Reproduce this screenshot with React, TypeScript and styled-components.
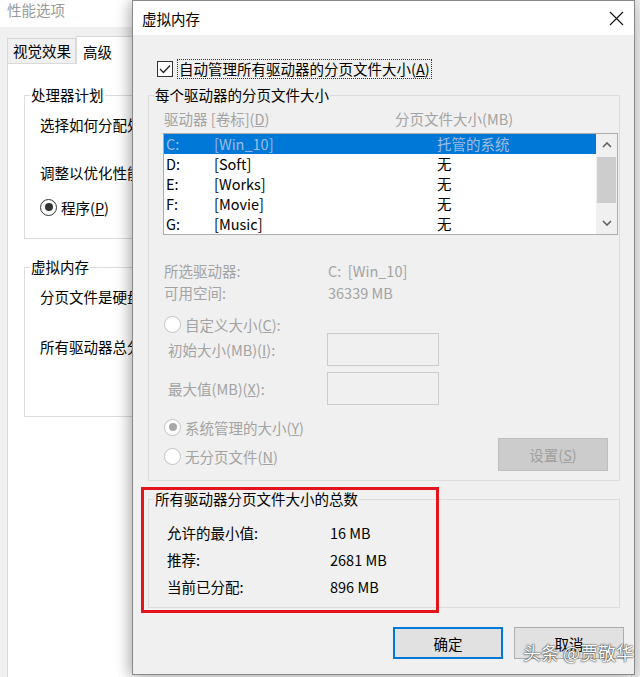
import React from "react";
import styled, { createGlobalStyle } from "styled-components";

const GlobalStyle = createGlobalStyle`
  html, body {
    margin: 0;
    padding: 0;
  }
  body {
    width: 640px;
    height: 677px;
    overflow: hidden;
    background: #f0f0f0;
    font-family: "Noto Sans CJK SC", "Noto Sans", sans-serif;
    font-size: 14.5px;
    color: #000;
  }
  * {
    box-sizing: border-box;
  }
`;

const Desktop = styled.div`
  position: relative;
  width: 640px;
  height: 677px;
  overflow: hidden;
`;

/* ---------- background window: 性能选项 ---------- */

const BackWindow = styled.div`
  position: absolute;
  left: 0;
  top: 0;
  width: 632px;
  height: 720px;
  display: flex;
  flex-direction: column;
  background: #f0f0f0;
`;

const BackTitle = styled.div`
  height: 27px;
  padding: 0 7px;
  line-height: 20px;
  background: #fff;
  color: #9a9a9a;
`;

const TabStrip = styled.div`
  display: flex;
  align-items: flex-end;
  height: 36px;
  padding-left: 7px;
`;

const Tab = styled.div<{ $active?: boolean }>`
  height: ${(p) => (p.$active ? "28px" : "25px")};
  padding: ${(p) => (p.$active ? "0 24px 0 6px" : "0 4px 0 5px")};
  line-height: ${(p) => (p.$active ? "30px" : "24px")};
  border: 1px solid #d9d9d9;
  border-bottom: none;
  background: ${(p) => (p.$active ? "#fff" : "#f0f0f0")};
  margin-bottom: ${(p) => (p.$active ? "-1px" : "0")};
  position: relative;
`;

const TabPanel = styled.div`
  flex: 1;
  margin-left: 7px;
  border: 1px solid #d9d9d9;
  background: #fff;
  padding: 21px 16px 0 16px;
`;

const GroupBox = styled.fieldset<{ $width?: number }>`
  margin: 0;
  padding: 0;
  border: 1px solid #dcdcdc;
  min-inline-size: 0;
  ${(p) => (p.$width ? `width: ${p.$width}px;` : "")}
`;

const Legend = styled.legend`
  margin-left: 5px;
  padding: 0 1px;
  line-height: 20px;
`;

const BackGroupBody = styled.div<{ $bottom: number }>`
  padding: 10px 15px ${(p) => p.$bottom}px;
`;

/* the window text runs on under the dialog; clip it there */
const TextLine = styled.div<{ $gap?: number }>`
  width: 110px;
  overflow: hidden;
  line-height: 20px;
  margin-top: ${(p) => p.$gap ?? 0}px;
  white-space: nowrap;
`;

const BackRadioRow = styled.div`
  display: flex;
  align-items: center;
  gap: 4px;
  width: 110px;
  overflow: hidden;
  height: 20px;
  margin-top: 14px;
  white-space: nowrap;
`;

const SecondGroup = styled.div`
  margin-top: 18px;
`;

/* ---------- dialog: 虚拟内存 ---------- */

const Dialog = styled.div`
  position: absolute;
  left: 132px;
  top: 0;
  width: 503px;
  height: 675px;
  border: 1px solid #8a8a8a;
  background: #f0f0f0;
  box-shadow: -3px 0 12px rgba(0, 0, 0, 0.2), 0 6px 18px rgba(0, 0, 0, 0.18);
  display: flex;
  flex-direction: column;
`;

const DialogTitle = styled.div`
  height: 34px;
  display: flex;
  align-items: center;
  justify-content: space-between;
  padding-left: 9px;
  background: #fff;
`;

const CloseBox = styled.div`
  width: 36px;
  height: 34px;
  display: flex;
  align-items: center;
  justify-content: center;
`;

const DialogBody = styled.div`
  flex: 1;
  padding: 24px 10px 0 15px;
  display: flex;
  flex-direction: column;
`;

const CheckRow = styled.div`
  display: flex;
  align-items: center;
  gap: 4px;
  height: 20px;
  padding-left: 9px;
`;

const CheckBox = styled.div`
  width: 16px;
  height: 16px;
  border: 1px solid #333;
  background: #fff;
  display: flex;
  align-items: center;
  justify-content: center;
`;

const FocusLabel = styled.span`
  border: 1px dotted #333;
  padding: 0 1px;
  line-height: 18px;
`;

const Group1 = styled(GroupBox)`
  margin-top: 6px;
`;

const Group1Body = styled.div`
  padding: 5px 1px 9px 14px;
`;

const HeaderRow = styled.div`
  display: grid;
  grid-template-columns: 231px 1fr;
  padding-left: 1px;
  line-height: 18px;
  color: #a3a3a3;
`;

const ListBox = styled.div`
  margin-top: 5px;
  height: 102px;
  border: 1px solid #adadad;
  display: flex;
  background: #fff;
`;

const Rows = styled.div`
  flex: 1;
`;

const DriveRow = styled.div<{ $selected?: boolean }>`
  display: grid;
  grid-template-columns: 48px 223px 1fr;
  height: 20px;
  line-height: 20px;
  padding-left: 2px;
  background: ${(p) => (p.$selected ? "#0078d7" : "transparent")};
  color: ${(p) => (p.$selected ? "#9dbde2" : "#000")};
  white-space: pre;
`;

const ScrollBar = styled.div`
  width: 21px;
  background: #f0f0f0;
  display: flex;
  flex-direction: column;
`;

const ScrollButton = styled.div`
  height: 22px;
  display: flex;
  align-items: center;
  justify-content: center;
`;

const ScrollThumb = styled.div`
  height: 46px;
  margin: 1px 1px 0;
  background: #cdcdcd;
`;

const ScrollTrack = styled.div`
  flex: 1;
`;

const InfoGrid = styled.div`
  margin-top: 25px;
  display: grid;
  grid-template-columns: 164px 1fr;
  padding-left: 1px;
  line-height: 22px;
  color: #a3a3a3;
  white-space: pre;
`;

const RadioRow = styled.div<{ $gap?: number; $height?: number; $muted?: boolean }>`
  display: flex;
  align-items: center;
  gap: 4px;
  height: ${(p) => p.$height ?? 20}px;
  margin-top: ${(p) => p.$gap ?? 0}px;
  padding-left: 1px;
  color: ${(p) => (p.$muted ? "#a3a3a3" : "#000")};
  white-space: nowrap;
`;

const Radio = styled.div<{ $checked?: boolean; $disabled?: boolean }>`
  width: 17px;
  height: 17px;
  border-radius: 50%;
  border: 1px solid ${(p) => (p.$disabled ? "#c2c2c2" : "#333")};
  background: #fff;
  display: flex;
  align-items: center;
  justify-content: center;
  flex-shrink: 0;
  &::after {
    content: "";
    display: ${(p) => (p.$checked ? "block" : "none")};
    width: 8px;
    height: 8px;
    border-radius: 50%;
    background: ${(p) => (p.$disabled ? "#a8a8a8" : "#333")};
  }
`;

const SizeRow = styled.div<{ $gap?: number }>`
  display: grid;
  grid-template-columns: 163px 112px;
  align-items: center;
  height: 33px;
  margin-top: ${(p) => p.$gap ?? 0}px;
  padding-left: 1px;
  color: #a3a3a3;
`;

const SizeLabel = styled.span`
  padding-left: 4px;
`;

const SizeInput = styled.div`
  width: 112px;
  height: 33px;
  border: 1px solid #cccccc;
  background: #f0f0f0;
`;

const BottomRow = styled.div`
  display: flex;
  justify-content: space-between;
  align-items: flex-start;
  margin-top: 12px;
`;

const RadioColumn = styled.div`
  display: flex;
  flex-direction: column;
`;

const SetButton = styled.div`
  width: 110px;
  height: 33px;
  margin-top: 21px;
  margin-right: 10px;
  border: 1px solid #bfbfbf;
  background: #cccccc;
  color: #a0a0a0;
  display: flex;
  align-items: center;
  justify-content: center;
`;

const Group2 = styled(GroupBox)`
  margin-top: 8px;
`;

const TotalGrid = styled.div`
  display: grid;
  grid-template-columns: 163px 1fr;
  padding: 10px 0 7px 18px;
  line-height: 27px;
`;

const Footer = styled.div`
  display: flex;
  justify-content: flex-end;
  gap: 11px;
  margin-top: 19px;
`;

const PushButton = styled.div<{ $default?: boolean }>`
  width: 110px;
  height: 32px;
  border: 1px solid ${(p) => (p.$default ? "#0078d7" : "#adadad")};
  box-shadow: ${(p) => (p.$default ? "inset 0 0 0 1px #0078d7" : "none")};
  background: #e1e1e1;
  display: flex;
  align-items: center;
  justify-content: center;
`;

const Highlight = styled.div`
  position: absolute;
  left: 8px;
  top: 486px;
  width: 298px;
  height: 126px;
  border: 3px solid #e3141d;
  pointer-events: none;
`;

const Watermark = styled.div`
  position: absolute;
  left: 523px;
  top: 640px;
  font-size: 18px;
  line-height: 24px;
  color: #fff;
  text-shadow: 0 0 2px rgba(0, 0, 0, 0.75), 0 0 1px rgba(0, 0, 0, 0.9);
  white-space: nowrap;
`;

const drives = [
  { letter: "C:", label: "[Win_10]", size: "托管的系统" },
  { letter: "D:", label: "[Soft]", size: "无" },
  { letter: "E:", label: "[Works]", size: "无" },
  { letter: "F:", label: "[Movie]", size: "无" },
  { letter: "G:", label: "[Music]", size: "无" },
];

const totals = [
  ["允许的最小值:", "16 MB"],
  ["推荐:", "2681 MB"],
  ["当前已分配:", "896 MB"],
];

const Chevron = ({ up }: { up?: boolean }) => (
  <svg width="10" height="6" viewBox="0 0 10 6">
    <path
      d={up ? "M1 5 L5 1 L9 5" : "M1 1 L5 5 L9 1"}
      fill="none"
      stroke="#606060"
      strokeWidth="1.6"
    />
  </svg>
);

export default function App() {
  return (
    <Desktop>
      <GlobalStyle />
      <BackWindow>
        <BackTitle>性能选项</BackTitle>
        <TabStrip>
          <Tab>视觉效果</Tab>
          <Tab $active>高级</Tab>
        </TabStrip>
        <TabPanel>
          <GroupBox>
            <Legend>处理器计划</Legend>
            <BackGroupBody $bottom={21}>
              <TextLine>选择如何分配处理器资源。</TextLine>
              <TextLine $gap={28}>调整以优化性能:</TextLine>
              <BackRadioRow>
                <Radio $checked />
                <span>程序(<u>P</u>)</span>
              </BackRadioRow>
            </BackGroupBody>
          </GroupBox>
          <SecondGroup>
            <GroupBox>
              <Legend>虚拟内存</Legend>
              <BackGroupBody $bottom={59}>
                <TextLine>分页文件是硬盘上的一块区域</TextLine>
                <TextLine $gap={30}>所有驱动器总分页文件大小:</TextLine>
              </BackGroupBody>
            </GroupBox>
          </SecondGroup>
        </TabPanel>
      </BackWindow>

      <Dialog>
        <DialogTitle>
          <span>虚拟内存</span>
          <CloseBox>
            <svg width="15" height="15" viewBox="0 0 15 15">
              <path d="M1 1 L14 14 M14 1 L1 14" stroke="#111" strokeWidth="1.1" />
            </svg>
          </CloseBox>
        </DialogTitle>
        <DialogBody>
          <CheckRow>
            <CheckBox>
              <svg width="14" height="14" viewBox="0 0 14 14">
                <path d="M2 7 L5.5 10.5 L12 3.5" fill="none" stroke="#222" strokeWidth="1.3" />
              </svg>
            </CheckBox>
            <FocusLabel>
              自动管理所有驱动器的分页文件大小(<u>A</u>)
            </FocusLabel>
          </CheckRow>

          <Group1 $width={472}>
            <Legend>每个驱动器的分页文件大小</Legend>
            <Group1Body>
              <HeaderRow>
                <span>驱动器 [卷标](<u>D</u>)</span>
                <span>分页文件大小(MB)</span>
              </HeaderRow>
              <ListBox>
                <Rows>
                  {drives.map((d, i) => (
                    <DriveRow key={d.letter} $selected={i === 0}>
                      <span>{d.letter}</span>
                      <span>{d.label}</span>
                      <span>{d.size}</span>
                    </DriveRow>
                  ))}
                </Rows>
                <ScrollBar>
                  <ScrollButton>
                    <Chevron up />
                  </ScrollButton>
                  <ScrollThumb />
                  <ScrollTrack />
                  <ScrollButton>
                    <Chevron />
                  </ScrollButton>
                </ScrollBar>
              </ListBox>

              <InfoGrid>
                <span>所选驱动器:</span>
                <span>C:  [Win_10]</span>
                <span>可用空间:</span>
                <span>36339 MB</span>
              </InfoGrid>

              <RadioRow $gap={11} $height={18} $muted>
                <Radio $disabled />
                <span>自定义大小(<u>C</u>):</span>
              </RadioRow>
              <SizeRow>
                <SizeLabel>初始大小(MB)(<u>I</u>):</SizeLabel>
                <SizeInput />
              </SizeRow>
              <SizeRow $gap={6}>
                <SizeLabel>最大值(MB)(<u>X</u>):</SizeLabel>
                <SizeInput />
              </SizeRow>

              <BottomRow>
                <RadioColumn>
                  <RadioRow $muted>
                    <Radio $checked $disabled />
                    <span>系统管理的大小(<u>Y</u>)</span>
                  </RadioRow>
                  <RadioRow $gap={9} $muted>
                    <Radio $disabled />
                    <span>无分页文件(<u>N</u>)</span>
                  </RadioRow>
                </RadioColumn>
                <SetButton>设置(<u>S</u>)</SetButton>
              </BottomRow>
            </Group1Body>
          </Group1>

          <Group2 $width={472}>
            <Legend>所有驱动器分页文件大小的总数</Legend>
            <TotalGrid>
              {totals.map(([label, value]) => (
                <React.Fragment key={label}>
                  <span>{label}</span>
                  <span>{value}</span>
                </React.Fragment>
              ))}
            </TotalGrid>
          </Group2>

          <Footer>
            <PushButton $default>确定</PushButton>
            <PushButton>取消</PushButton>
          </Footer>
        </DialogBody>
        <Highlight />
      </Dialog>

      <Watermark>头条 @贾敬华</Watermark>
    </Desktop>
  );
}
